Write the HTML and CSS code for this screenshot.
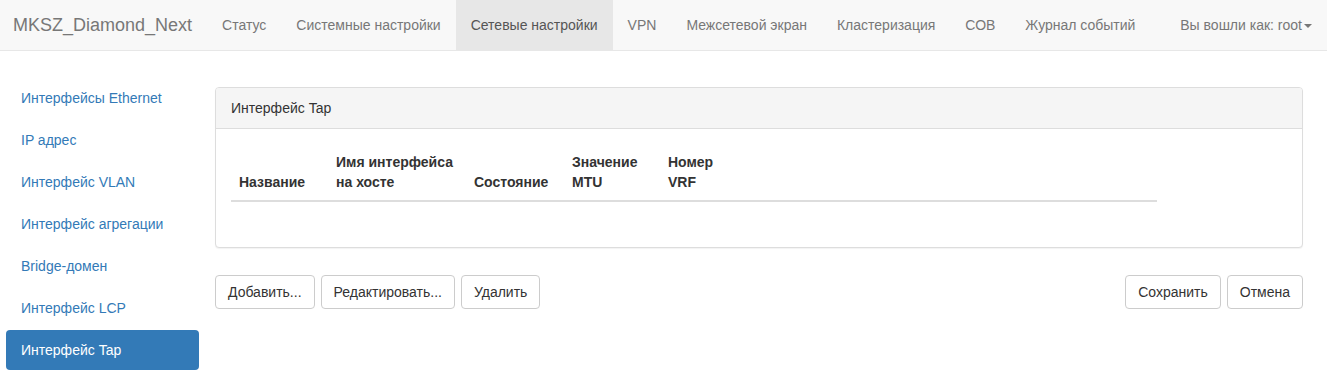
FILE: index.html
```html
<!DOCTYPE html>
<html lang="ru">
<head>
<meta charset="utf-8">
<title>MKSZ_Diamond_Next</title>
<link rel="stylesheet" href="styles.css">
</head>
<body>
<nav class="navbar">
  <a class="brand" href="#">MKSZ_Diamond_Next</a>
  <ul class="nav-main">
    <li><a href="#">Статус</a></li>
    <li><a href="#">Системные настройки</a></li>
    <li class="active"><a href="#">Сетевые настройки</a></li>
    <li><a href="#">VPN</a></li>
    <li><a href="#">Межсетевой экран</a></li>
    <li><a href="#">Кластеризация</a></li>
    <li><a href="#">СОВ</a></li>
    <li><a href="#">Журнал событий</a></li>
  </ul>
  <ul class="nav-right">
    <li><a href="#">Вы вошли как: root<span class="caret"></span></a></li>
  </ul>
</nav>
<div class="page">
  <ul class="pills">
    <li><a href="#">Интерфейсы Ethernet</a></li>
    <li><a href="#">IP адрес</a></li>
    <li><a href="#">Интерфейс VLAN</a></li>
    <li><a href="#">Интерфейс агрегации</a></li>
    <li><a href="#">Bridge-домен</a></li>
    <li><a href="#">Интерфейс LCP</a></li>
    <li class="active"><a href="#">Интерфейс Tap</a></li>
  </ul>
  <main class="main">
    <section class="panel">
      <div class="panel-heading">Интерфейс Tap</div>
      <div class="panel-body">
        <table class="table">
          <thead>
            <tr>
              <th class="c1">Название</th>
              <th class="c2">Имя интерфейса<br>на хосте</th>
              <th class="c3">Состояние</th>
              <th class="c4">Значение<br>MTU</th>
              <th class="c5">Номер<br>VRF</th>
            </tr>
          </thead>
          <tbody></tbody>
        </table>
      </div>
    </section>
    <div class="actions">
      <div class="group">
        <button class="btn">Добавить...</button>
        <button class="btn">Редактировать...</button>
        <button class="btn">Удалить</button>
      </div>
      <div class="group">
        <button class="btn">Сохранить</button>
        <button class="btn">Отмена</button>
      </div>
    </div>
  </main>
</div>
</body>
</html>
```

FILE: styles.css
```css
* { box-sizing: border-box; }
html, body { margin: 0; padding: 0; }
body {
  font-family: "Liberation Sans", Arial, sans-serif;
  font-size: 14px;
  line-height: 20px;
  color: #333;
  background: #fff;
}
a { text-decoration: none; }
ul { list-style: none; margin: 0; padding: 0; }

.navbar {
  display: flex;
  align-items: stretch;
  height: 51px;
  background: #f8f8f8;
  border-bottom: 1px solid #e7e7e7;
}
.brand {
  display: block;
  padding: 15px 15px 15px 13px;
  font-size: 18px;
  line-height: 20px;
  color: #777;
}
.nav-main, .nav-right { display: flex; }
.nav-right { margin-left: auto; }
.nav-main a, .nav-right a {
  display: block;
  padding: 15px;
  line-height: 20px;
  color: #777;
  height: 50px;
}
.nav-main li.active a {
  background: #e7e7e7;
  color: #555;
}
.caret {
  display: inline-block;
  width: 0;
  height: 0;
  margin-left: 2px;
  vertical-align: middle;
  border-top: 4px solid #777;
  border-left: 4px solid transparent;
  border-right: 4px solid transparent;
}

.page {
  display: flex;
  align-items: flex-start;
  padding: 0 24px 0 6px;
  gap: 16px;
}
.pills {
  width: 193px;
  flex: none;
  padding-top: 27px;
}
.pills li + li { margin-top: 2px; }
.pills a {
  display: block;
  padding: 10px 15px;
  color: #337ab7;
  border-radius: 4px;
}
.pills li.active a {
  background: #337ab7;
  color: #fff;
}

.main {
  flex: 1;
  padding-top: 36px;
}
.panel {
  border: 1px solid #ddd;
  border-radius: 4px;
  background: #fff;
  box-shadow: 0 1px 1px rgba(0,0,0,.05);
}
.panel-heading {
  padding: 10px 15px;
  background: #f5f5f5;
  border-bottom: 1px solid #ddd;
  border-radius: 3px 3px 0 0;
  color: #333;
}
.panel-body {
  padding: 15px 15px 15px;
}
.table {
  width: 926px;
  border-collapse: collapse;
  margin-bottom: 30px;
}
.table th {
  text-align: left;
  vertical-align: bottom;
  padding: 8px;
  line-height: 20px;
  font-weight: bold;
  border-bottom: 2px solid #ddd;
}
.c1 { width: 97px; }
.c2 { width: 138px; }
.c3 { width: 98px; }
.c4 { width: 96px; }

.actions {
  display: flex;
  justify-content: space-between;
  margin-top: 27px;
}
.group { display: flex; gap: 6px; }
.btn {
  font-family: inherit;
  font-size: 14px;
  line-height: 20px;
  padding: 6px 12px;
  color: #333;
  background: #fff;
  border: 1px solid #ccc;
  border-radius: 4px;
  cursor: pointer;
}
```
